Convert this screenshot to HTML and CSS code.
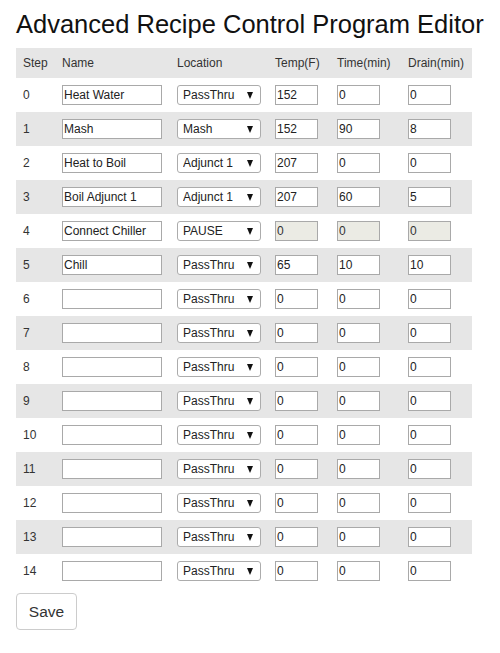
FILE: index.html
```html
<!DOCTYPE html>
<html>
<head>
<meta charset="utf-8">
<title>Advanced Recipe Control Program Editor</title>
<link rel="stylesheet" href="styles.css">
</head>
<body>
<div class="page">
<h1 class="title">Advanced Recipe Control Program Editor</h1>
<table class="recipe">
<colgroup>
<col class="c-step"><col class="c-name"><col class="c-loc"><col class="c-temp"><col class="c-time"><col class="c-drain">
</colgroup>
<thead>
<tr><th>Step</th><th>Name</th><th>Location</th><th>Temp(F)</th><th>Time(min)</th><th>Drain(min)</th></tr>
</thead>
<tbody>
<tr><td>0</td><td><input class="name" value="Heat Water"></td><td><span class="sel"><select><option selected>PassThru</option><option>Mash</option><option>Adjunct 1</option><option>PAUSE</option></select></span></td><td><input class="num" value="152"></td><td><input class="num" value="0"></td><td><input class="num" value="0"></td></tr>
<tr><td>1</td><td><input class="name" value="Mash"></td><td><span class="sel"><select><option>PassThru</option><option selected>Mash</option><option>Adjunct 1</option><option>PAUSE</option></select></span></td><td><input class="num" value="152"></td><td><input class="num" value="90"></td><td><input class="num" value="8"></td></tr>
<tr><td>2</td><td><input class="name" value="Heat to Boil"></td><td><span class="sel"><select><option>PassThru</option><option>Mash</option><option selected>Adjunct 1</option><option>PAUSE</option></select></span></td><td><input class="num" value="207"></td><td><input class="num" value="0"></td><td><input class="num" value="0"></td></tr>
<tr><td>3</td><td><input class="name" value="Boil Adjunct 1"></td><td><span class="sel"><select><option>PassThru</option><option>Mash</option><option selected>Adjunct 1</option><option>PAUSE</option></select></span></td><td><input class="num" value="207"></td><td><input class="num" value="60"></td><td><input class="num" value="5"></td></tr>
<tr><td>4</td><td><input class="name" value="Connect Chiller"></td><td><span class="sel"><select><option>PassThru</option><option>Mash</option><option>Adjunct 1</option><option selected>PAUSE</option></select></span></td><td><input class="num" value="0" disabled></td><td><input class="num" value="0" disabled></td><td><input class="num" value="0" disabled></td></tr>
<tr><td>5</td><td><input class="name" value="Chill"></td><td><span class="sel"><select><option selected>PassThru</option><option>Mash</option><option>Adjunct 1</option><option>PAUSE</option></select></span></td><td><input class="num" value="65"></td><td><input class="num" value="10"></td><td><input class="num" value="10"></td></tr>
<tr><td>6</td><td><input class="name" value=""></td><td><span class="sel"><select><option selected>PassThru</option><option>Mash</option><option>Adjunct 1</option><option>PAUSE</option></select></span></td><td><input class="num" value="0"></td><td><input class="num" value="0"></td><td><input class="num" value="0"></td></tr>
<tr><td>7</td><td><input class="name" value=""></td><td><span class="sel"><select><option selected>PassThru</option><option>Mash</option><option>Adjunct 1</option><option>PAUSE</option></select></span></td><td><input class="num" value="0"></td><td><input class="num" value="0"></td><td><input class="num" value="0"></td></tr>
<tr><td>8</td><td><input class="name" value=""></td><td><span class="sel"><select><option selected>PassThru</option><option>Mash</option><option>Adjunct 1</option><option>PAUSE</option></select></span></td><td><input class="num" value="0"></td><td><input class="num" value="0"></td><td><input class="num" value="0"></td></tr>
<tr><td>9</td><td><input class="name" value=""></td><td><span class="sel"><select><option selected>PassThru</option><option>Mash</option><option>Adjunct 1</option><option>PAUSE</option></select></span></td><td><input class="num" value="0"></td><td><input class="num" value="0"></td><td><input class="num" value="0"></td></tr>
<tr><td>10</td><td><input class="name" value=""></td><td><span class="sel"><select><option selected>PassThru</option><option>Mash</option><option>Adjunct 1</option><option>PAUSE</option></select></span></td><td><input class="num" value="0"></td><td><input class="num" value="0"></td><td><input class="num" value="0"></td></tr>
<tr><td>11</td><td><input class="name" value=""></td><td><span class="sel"><select><option selected>PassThru</option><option>Mash</option><option>Adjunct 1</option><option>PAUSE</option></select></span></td><td><input class="num" value="0"></td><td><input class="num" value="0"></td><td><input class="num" value="0"></td></tr>
<tr><td>12</td><td><input class="name" value=""></td><td><span class="sel"><select><option selected>PassThru</option><option>Mash</option><option>Adjunct 1</option><option>PAUSE</option></select></span></td><td><input class="num" value="0"></td><td><input class="num" value="0"></td><td><input class="num" value="0"></td></tr>
<tr><td>13</td><td><input class="name" value=""></td><td><span class="sel"><select><option selected>PassThru</option><option>Mash</option><option>Adjunct 1</option><option>PAUSE</option></select></span></td><td><input class="num" value="0"></td><td><input class="num" value="0"></td><td><input class="num" value="0"></td></tr>
<tr><td>14</td><td><input class="name" value=""></td><td><span class="sel"><select><option selected>PassThru</option><option>Mash</option><option>Adjunct 1</option><option>PAUSE</option></select></span></td><td><input class="num" value="0"></td><td><input class="num" value="0"></td><td><input class="num" value="0"></td></tr>
</tbody>
</table>
<button class="save" type="button">Save</button>
</div>
</body>
</html>
```
FILE: styles.css
```css
html, body {
  margin: 0;
  padding: 0;
  background: #fff;
}
body {
  font-family: "Liberation Sans", Arial, sans-serif;
  color: #333;
}
.page {
  padding: 9px 16px 0 16px;
}
.title {
  margin: 0 0 9px 0;
  font-size: 25.5px;
  line-height: 30px;
  font-weight: normal;
  color: #111;
}
.recipe {
  border-collapse: collapse;
  table-layout: fixed;
  width: 456px;
  font-size: 12px;
}
.c-step { width: 39px; }
.c-name { width: 115px; }
.c-loc { width: 98px; }
.c-temp { width: 62px; }
.c-time { width: 71px; }
.c-drain { width: 71px; }
.recipe th, .recipe td {
  padding: 0 0 0 7px;
  text-align: left;
  vertical-align: middle;
  font-weight: normal;
  color: #333;
  white-space: nowrap;
}
.recipe thead tr {
  height: 30px;
  background: #e6e6e6;
}
.recipe tbody tr {
  height: 34px;
}
.recipe tbody tr:nth-child(even) {
  background: #e6e6e6;
}
.recipe input {
  box-sizing: border-box;
  display: block;
  height: 20px;
  margin: 0;
  padding: 0 1px;
  border: 1px solid #a9a9a9;
  background: #fff;
  font-family: "Liberation Sans", Arial, sans-serif;
  font-size: 12px;
  color: #222;
  outline: none;
}
.recipe input.name { width: 100px; }
.recipe input.num { width: 43px; }
.recipe input:disabled {
  background: #ebebe4;
  color: #333;
  -webkit-text-fill-color: #333;
  opacity: 1;
}
.sel {
  position: relative;
  display: block;
  width: 84px;
  height: 20px;
}
.sel select {
  -webkit-appearance: none;
  appearance: none;
  box-sizing: border-box;
  width: 84px;
  height: 20px;
  margin: 0;
  padding: 0 0 0 5px;
  border: 1px solid #acacac;
  border-radius: 3px;
  background: #fff;
  font-family: "Liberation Sans", Arial, sans-serif;
  font-size: 12px;
  color: #222;
  outline: none;
}
.sel::after {
  content: "";
  position: absolute;
  right: 8px;
  top: 7px;
  width: 0;
  height: 0;
  border-left: 3.5px solid transparent;
  border-right: 3.5px solid transparent;
  border-top: 7px solid #111;
  pointer-events: none;
}
.save {
  display: block;
  margin-top: 5px;
  box-sizing: border-box;
  width: 61px;
  height: 37px;
  padding: 0;
  border: 1px solid #ccc;
  border-radius: 4px;
  background: #fff;
  font-family: "Liberation Sans", Arial, sans-serif;
  font-size: 15.5px;
  color: #333;
}
```
